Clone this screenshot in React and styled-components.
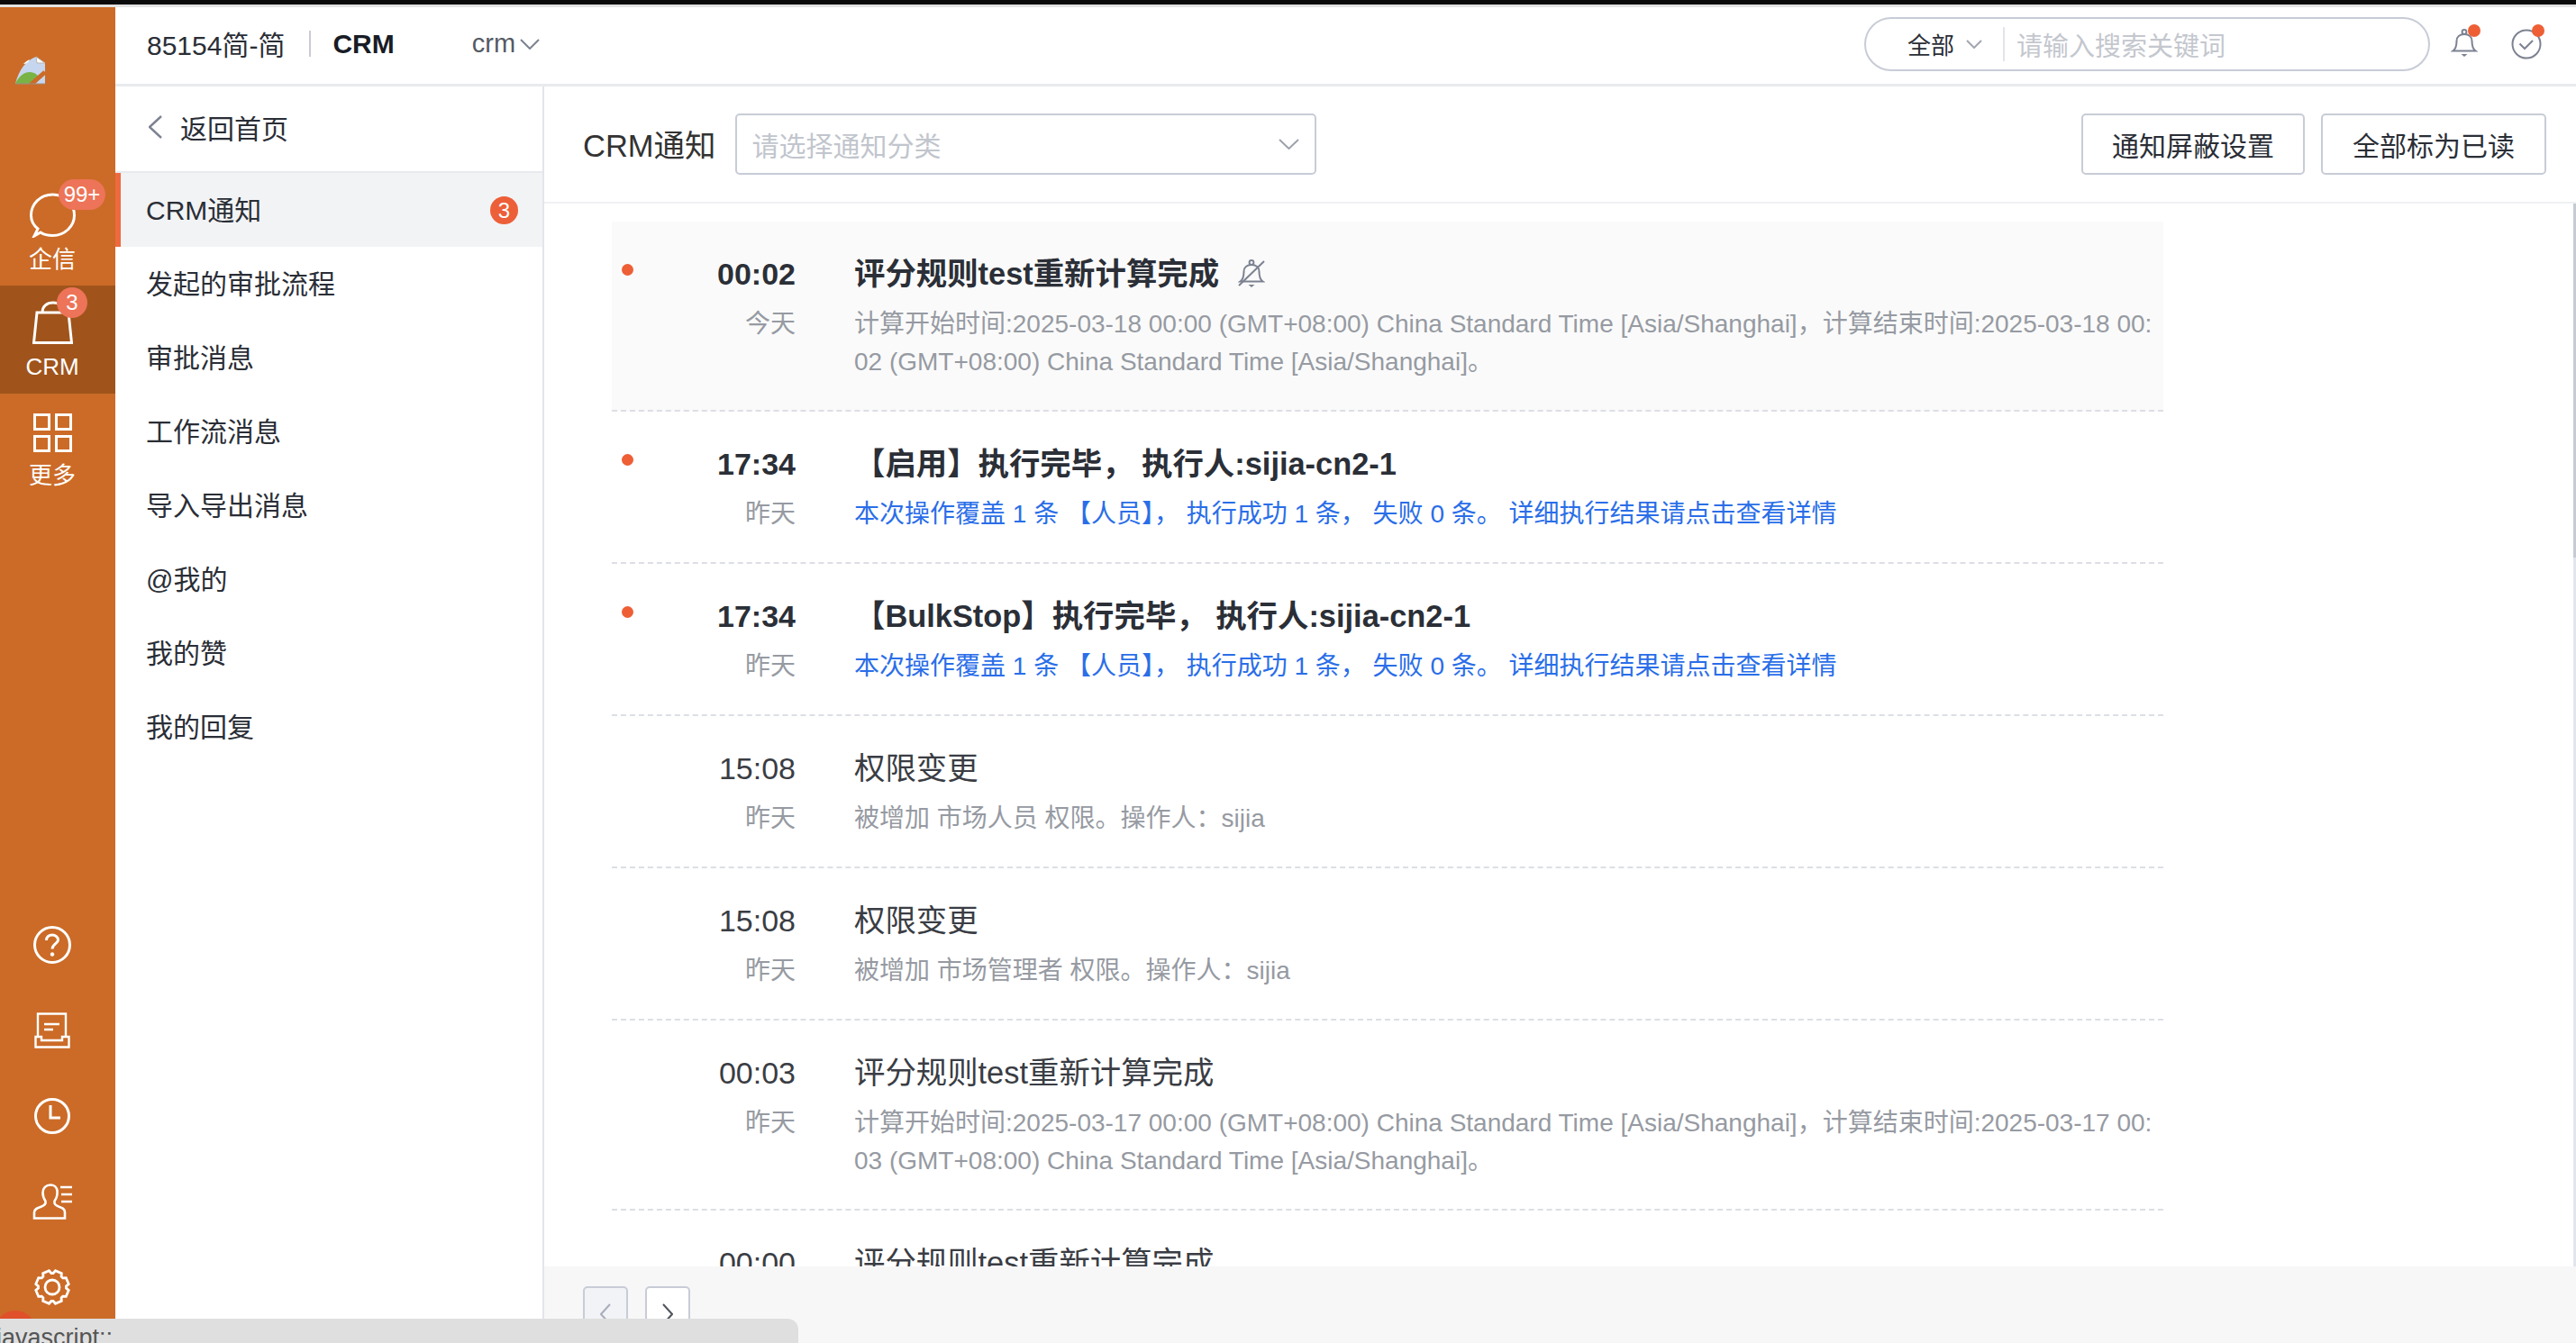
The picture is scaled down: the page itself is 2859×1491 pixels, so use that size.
import React from 'react';
import styled, { createGlobalStyle } from 'styled-components';

const GlobalStyle = createGlobalStyle`
  html, body {
    margin: 0;
    padding: 0;
    background: #fff;
    overflow: hidden;
  }
  * {
    box-sizing: border-box;
  }
`;

const Page = styled.div`
  position: relative;
  width: 2859px;
  height: 1491px;
  overflow: hidden;
  display: flex;
  flex-direction: column;
  font-family: "Liberation Sans", "Noto Sans CJK SC", sans-serif;
  color: #181c25;
`;

const TopStrip = styled.div`
  flex: none;
  height: 8px;
  background: #e2e2e2;
  border-top: 5px solid #0a0a0a;
`;

const Body = styled.div`
  flex: 1;
  min-height: 0;
  display: flex;
`;

/* left orange rail */
const Rail = styled.div`
  position: relative;
  flex: none;
  width: 128px;
  display: flex;
  flex-direction: column;
  background: #cb6b27;
  color: #fff;
`;

const LogoBox = styled.div`
  flex: none;
  height: 189px;
  padding: 54px 0 0 17px;
`;

const RailItem = styled.div`
  position: relative;
  flex: none;
  height: 120px;
  padding-right: 12px;
  display: flex;
  flex-direction: column;
  align-items: center;
  background: ${props => (props.$active ? '#a0541b' : 'transparent')};
`;

const RailIconSlot = styled.div`
  height: ${props => props.$h}px;
  display: flex;
  align-items: flex-end;
  justify-content: center;
  margin-bottom: ${props => props.$gap}px;
`;

const RailLabel = styled.div`
  font-size: 26px;
  line-height: 36px;
`;

const RailBadge = styled.span`
  position: absolute;
  left: ${props => props.$left}px;
  top: 2px;
  min-width: ${props => props.$w}px;
  height: 34px;
  border-radius: 17px;
  background: #ed7458;
  color: #fff;
  font-size: 24px;
  line-height: 34px;
  text-align: center;
`;

const RailBottom = styled.div`
  margin-top: auto;
  padding: 0 12px 15px 0;
`;

const RailTool = styled.div`
  height: 95px;
  display: flex;
  align-items: center;
  justify-content: center;
`;

const AvatarDot = styled.span`
  position: absolute;
  left: -6px;
  bottom: 0;
  width: 46px;
  height: 36px;
  border-radius: 23px 23px 0 0;
  background: #e0502a;
`;

const Main = styled.div`
  flex: 1;
  min-width: 0;
  display: flex;
  flex-direction: column;
`;

/* top header */
const Header = styled.div`
  flex: none;
  height: 88px;
  display: flex;
  align-items: center;
  padding: 0 38px 4px 35px;
  border-bottom: 3px solid #e8eaee;
`;

const Tenant = styled.div`
  font-size: 30px;
  margin-bottom: 2px;
  color: #2a2e36;
`;

const HeaderDivider = styled.div`
  width: 2px;
  height: 29px;
  margin: 0 24px 0 27px;
  background: #c9ccd3;
`;

const AppName = styled.div`
  font-size: 30px;
  font-weight: 700;
`;

const AppSwitch = styled.div`
  display: flex;
  align-items: center;
  gap: 5px;
  margin-left: 86px;
  font-size: 29px;
  color: #555a64;
`;

const SearchPill = styled.div`
  display: flex;
  align-items: center;
  width: 628px;
  height: 60px;
  margin-left: auto;
  padding-left: 46px;
  border: 2px solid #c8ccd6;
  border-radius: 30px;
`;

const SearchScope = styled.div`
  display: flex;
  align-items: center;
  gap: 13px;
  font-size: 26px;
  color: #2a2e36;
`;

const SearchDivider = styled.div`
  width: 2px;
  height: 38px;
  margin: 0 13px 0 23px;
  background: #e2e4e9;
`;

const SearchHint = styled.div`
  font-size: 29px;
  color: #c4c7ce;
`;

const NoticeIcons = styled.div`
  display: flex;
  align-items: center;
  gap: 37px;
  margin-left: 23px;
`;

const NoticeIcon = styled.div`
  position: relative;
  height: 34px;
  display: flex;
`;

const RedDot = styled.span`
  position: absolute;
  right: -3px;
  top: -5px;
  width: 14px;
  height: 14px;
  border-radius: 50%;
  background: #ee5f36;
`;

const Split = styled.div`
  flex: 1;
  min-height: 0;
  display: flex;
`;

/* category menu */
const Menu = styled.div`
  flex: none;
  width: 476px;
  border-right: 2px solid #e3e5ea;
`;

const BackRow = styled.div`
  height: 96px;
  display: flex;
  align-items: center;
  gap: 20px;
  padding: 0 0 4px 37px;
  border-bottom: 2px solid #e8eaee;
  font-size: 30px;
  color: #2a2e36;
`;

const MenuRow = styled.div`
  height: 82px;
  display: flex;
  align-items: center;
  justify-content: space-between;
  padding: 0 27px 5px ${props => (props.$active ? '28px' : '34px')};
  font-size: 30px;
  color: #2a2e36;
  background: ${props => (props.$active ? '#f2f3f5' : 'transparent')};
  border-left: ${props => (props.$active ? '6px solid #ee6a3e' : '0')};
`;

const MenuBadge = styled.span`
  width: 31px;
  height: 31px;
  margin-top: 5px;
  border-radius: 50%;
  background: #ec5f38;
  color: #fff;
  font-size: 24px;
  line-height: 31px;
  text-align: center;
`;

const Content = styled.div`
  flex: 1;
  min-width: 0;
  display: flex;
  flex-direction: column;
`;

const FilterBar = styled.div`
  flex: none;
  height: 130px;
  display: flex;
  align-items: center;
  padding: 0 33px 0 43px;
  border-bottom: 2px solid #f0f1f3;
`;

const FilterLabel = styled.div`
  font-size: 34.5px;
  color: #333;
  margin: 0 21px 3px 0;
`;

const Select = styled.div`
  width: 645px;
  height: 68px;
  display: flex;
  align-items: center;
  justify-content: space-between;
  padding: 0 17px;
  border: 2px solid #c8ccd6;
  border-radius: 5px;
  font-size: 30px;
  color: #c1c5cd;
`;

const FilterActions = styled.div`
  display: flex;
  gap: 18px;
  margin-left: auto;
`;

const ActionButton = styled.button`
  width: ${props => props.$w}px;
  height: 68px;
  padding: 0;
  background: #fff;
  border: 2px solid #c8ccd6;
  border-radius: 5px;
  font-family: inherit;
  font-size: 30px;
  color: #2a2e36;
`;

const ListArea = styled.div`
  position: relative;
  flex: 1;
  min-height: 0;
  overflow: hidden;
  padding: 20px 0 0 75px;
`;

const ScrollTrack = styled.div`
  position: absolute;
  right: 0;
  top: 0;
  bottom: 0;
  width: 3px;
  background: #e3e5ec;
`;

const ScrollThumb = styled.div`
  height: 393px;
  background: #c5cad3;
`;

const Row = styled.div`
  width: 1722px;
  display: flex;
  padding: 37px 8px 32px 0;
  border-bottom: 2px dashed #dcdfe5;
  background: ${props => (props.$highlight ? '#fafafa' : 'transparent')};
`;

const DotCell = styled.div`
  flex: none;
  width: 36px;
  padding: 10px 0 0 11px;
`;

const UnreadDot = styled.span`
  display: block;
  width: 13px;
  height: 13px;
  border-radius: 50%;
  background: #ee5f36;
`;

const TimeCell = styled.div`
  flex: none;
  width: 168px;
  margin-right: 65px;
  text-align: right;
`;

const Clock = styled.div`
  height: 42px;
  margin-bottom: 14px;
  font-size: 34px;
  line-height: 42px;
  font-weight: ${props => (props.$unread ? 700 : 400)};
  color: ${props => (props.$unread ? '#2b2f37' : '#3a3d44')};
`;

const Day = styled.div`
  font-size: 28px;
  line-height: 42px;
  color: #969aa2;
`;

const TextCell = styled.div`
  flex: 1;
  min-width: 0;
`;

const Title = styled.div`
  display: flex;
  align-items: center;
  gap: 21px;
  height: 42px;
  margin-bottom: 14px;
  font-size: 34.4px;
  line-height: 42px;
  font-weight: ${props => (props.$unread ? 700 : 400)};
  color: ${props => (props.$unread ? '#2b2f37' : '#3a3d44')};
`;

const Desc = styled.div`
  font-size: 28px;
  line-height: 42px;
  word-break: break-all;
  color: ${props => (props.$link ? '#2a6ee8' : '#969aa2')};
`;

const Pager = styled.div`
  flex: none;
  height: 85px;
  display: flex;
  gap: 19px;
  padding: 22px 0 0 43px;
  background: #f7f7f8;
`;

const PageButton = styled.div`
  width: 50px;
  height: 62px;
  display: flex;
  align-items: center;
  justify-content: center;
  border: 2px solid #c8ccd6;
  border-radius: 5px;
  background: ${props => (props.$disabled ? '#f1f3f7' : '#fff')};
`;

const StatusBar = styled.div`
  position: absolute;
  left: 0;
  bottom: 0;
  width: 886px;
  height: 27px;
  overflow: hidden;
  padding: 5px 0 0 0;
  background: #dfdfdf;
  border-radius: 0 12px 0 0;
  font-size: 27px;
  line-height: 32px;
  color: #555;
  text-indent: -4px;
`;

const Chevron = ({ dir = 'down', w = 22, h = 12, color = '#7c8291', sw = 2 }) => {
  const points = {
    down: `1,1 ${w / 2},${h - 1} ${w - 1},1`,
    left: `${w - 1},1 1,${h / 2} ${w - 1},${h - 1}`,
    right: `1,1 ${w - 1},${h / 2} 1,${h - 1}`,
  };
  return (
    <svg width={w} height={h} viewBox={`0 0 ${w} ${h}`} fill="none">
      <polyline points={points[dir]} stroke={color} strokeWidth={sw} />
    </svg>
  );
};

const BrokenImage = () => (
  <svg width="33" height="32" viewBox="0 0 33 32">
    <path d="M0 31C4 15 12 5 23 1L33 8V31Z" fill="#c6d6ef" />
    <path d="M23 1L33 8H24Z" fill="#fff" stroke="#b9b4ae" strokeWidth="1" />
    <path d="M9 9C11 7 13 5 16 4C15 7 12 9 9 9Z" fill="#fff" />
    <path d="M0 31C4 22 10 18 16 18C22 18 25 22 27 24L19 31Z" fill="#79b346" />
    <line x1="15" y1="34" x2="33" y2="18" stroke="#cb6b27" strokeWidth="5" />
    <path d="M0 31H33" stroke="#9a8f86" strokeWidth="1.2" />
  </svg>
);

const ChatIcon = () => (
  <svg width="51" height="50" viewBox="0 0 51 50" fill="none" stroke="#fff" strokeWidth="3">
    <path d="M9 40C4 36 1.5 31 1.5 25C1.5 12 12 2 25.5 2C39 2 49.5 12 49.5 25C49.5 37 39 47.5 25.5 47.5C20 47.5 15 46 12 44L5 48Z" />
  </svg>
);

const BagIcon = () => (
  <svg width="45" height="48" viewBox="0 0 45 48" fill="none" stroke="#fff" strokeWidth="3">
    <path d="M5 13H40L43.5 46.5H1.5Z" />
    <path d="M11 13C11 6 16 2 23 2C30 2 34 6 34 13" />
  </svg>
);

const GridIcon = () => (
  <svg width="43" height="43" viewBox="0 0 43 43" fill="none" stroke="#fff" strokeWidth="3">
    <rect x="1.5" y="1.5" width="16" height="16" />
    <rect x="25.5" y="1.5" width="16" height="16" />
    <rect x="1.5" y="25.5" width="16" height="16" />
    <rect x="25.5" y="25.5" width="16" height="16" />
  </svg>
);

const HelpIcon = () => (
  <svg width="42" height="42" viewBox="0 0 42 42" fill="none" stroke="#fff" strokeWidth="3">
    <circle cx="21" cy="21" r="19.5" />
    <path d="M14.5 16C14.5 12 17.5 10 21 10C24.5 10 27.5 12.5 27.5 15.5C27.5 19.5 21 20 21 25.5" />
    <circle cx="21" cy="31.5" r="2.2" fill="#fff" stroke="none" />
  </svg>
);

const TrayIcon = () => (
  <svg width="40" height="40" viewBox="0 0 40 40" fill="none" stroke="#fff" strokeWidth="2.4">
    <path d="M4 27V1.5H35V27" />
    <path d="M1.5 27H8V31H31V27H38.5V38.5H1.5Z" />
    <path d="M11 13H28M11 19H21" strokeWidth="2.6" />
  </svg>
);

const ClockIcon = () => (
  <svg width="40" height="40" viewBox="0 0 40 40" fill="none" stroke="#fff" strokeWidth="3">
    <circle cx="20" cy="20" r="18.5" />
    <path d="M18 8V22H29" />
  </svg>
);

const PersonIcon = () => (
  <svg width="45" height="40" viewBox="0 0 45 40" fill="none" stroke="#fff" strokeWidth="2.6">
    <path d="M2 38.5V32C2 28 6 27 10 25.5C14 24 15 22 14.5 19.5C12 16 11.5 13 11.5 10C11.5 5 15 1.5 20 1.5C24 1.5 27 4 27.5 8C28 13 27 16 24.5 19.5C24 22.5 25 24 29 25.5C33 27 36 28 36 32V38.5Z" />
    <path d="M31 4H44M32 12H44M32 20H44" />
  </svg>
);

const gearPath = (() => {
  const parts = [];
  const teeth = 8;
  for (let i = 0; i < teeth; i++) {
    const step = (Math.PI * 2) / teeth;
    const a = i * step + step / 2;
    const at = (r, off) => `${(20 + r * Math.cos(a + off)).toFixed(1)} ${(20 + r * Math.sin(a + off)).toFixed(1)}`;
    parts.push(`${i === 0 ? 'M' : 'L'}${at(15.5, -0.32)}`, `L${at(18.5, -0.2)}`, `L${at(18.5, 0.2)}`, `L${at(15.5, 0.32)}`);
  }
  return `${parts.join(' ')} Z`;
})();

const GearIcon = () => (
  <svg width="40" height="40" viewBox="0 0 40 40" fill="none" stroke="#fff" strokeWidth="2.8">
    <path d={gearPath} />
    <circle cx="20" cy="20" r="8" />
  </svg>
);

const BellIcon = ({ muted }) => (
  <svg width="30" height="32" viewBox="0 0 30 32" fill="none" stroke="#7c8291" strokeWidth="2">
    <circle cx="15" cy="3.5" r="2.4" />
    <path d="M2.5 24.5C6 22 6.5 18 6.5 13.5C6.5 9 10 6 15 6C20 6 23.5 9 23.5 13.5C23.5 18 24 22 27.5 24.5Z" />
    <path d="M11.5 28H18.5L15 31Z" fill="#7c8291" stroke="none" />
    {muted && <line x1="1" y1="29" x2="29" y2="2" />}
  </svg>
);

const CheckCircle = () => (
  <svg width="34" height="34" viewBox="0 0 34 34" fill="none" stroke="#7c8291" strokeWidth="2">
    <circle cx="17" cy="17" r="15.5" />
    <polyline points="9.5,16.5 15,22 24,13" />
  </svg>
);

const calcDesc = (start, end) =>
  `计算开始时间:${start} 00:00 (GMT+08:00) China Standard Time [Asia/Shanghai]，计算结束时间:${end} ${end === '2025-03-18' ? '00:02' : '00:03'} (GMT+08:00) China Standard Time [Asia/Shanghai]。`;

const linkDesc = '本次操作覆盖 1 条 【人员】， 执行成功 1 条， 失败 0 条。 详细执行结果请点击查看详情';

const rows = [
  { time: '00:02', day: '今天', title: '评分规则test重新计算完成', desc: calcDesc('2025-03-18', '2025-03-18'), unread: true, muted: true, highlight: true },
  { time: '17:34', day: '昨天', title: '【启用】执行完毕， 执行人:sijia-cn2-1', desc: linkDesc, unread: true, link: true },
  { time: '17:34', day: '昨天', title: '【BulkStop】执行完毕， 执行人:sijia-cn2-1', desc: linkDesc, unread: true, link: true },
  { time: '15:08', day: '昨天', title: '权限变更', desc: '被增加 市场人员 权限。操作人：sijia' },
  { time: '15:08', day: '昨天', title: '权限变更', desc: '被增加 市场管理者 权限。操作人：sijia' },
  { time: '00:03', day: '昨天', title: '评分规则test重新计算完成', desc: calcDesc('2025-03-17', '2025-03-17') },
  { time: '00:00', day: '昨天', title: '评分规则test重新计算完成', desc: '' },
];

const menuItems = ['发起的审批流程', '审批消息', '工作流消息', '导入导出消息', '@我的', '我的赞', '我的回复'];

const App = () => (
  <Page>
    <GlobalStyle />
    <TopStrip />
    <Body>
      <Rail>
        <LogoBox>
          <BrokenImage />
        </LogoBox>
        <RailItem>
          <RailIconSlot $h={67} $gap={6}>
            <ChatIcon />
          </RailIconSlot>
          <RailLabel>企信</RailLabel>
          <RailBadge $left={65} $w={52}>99+</RailBadge>
        </RailItem>
        <RailItem $active>
          <RailIconSlot $h={65} $gap={7}>
            <BagIcon />
          </RailIconSlot>
          <RailLabel>CRM</RailLabel>
          <RailBadge $left={63} $w={34}>3</RailBadge>
        </RailItem>
        <RailItem>
          <RailIconSlot $h={65} $gap={8}>
            <GridIcon />
          </RailIconSlot>
          <RailLabel>更多</RailLabel>
        </RailItem>
        <RailBottom>
          <RailTool><HelpIcon /></RailTool>
          <RailTool><TrayIcon /></RailTool>
          <RailTool><ClockIcon /></RailTool>
          <RailTool><PersonIcon /></RailTool>
          <RailTool><GearIcon /></RailTool>
        </RailBottom>
        <AvatarDot />
      </Rail>

      <Main>
        <Header>
          <Tenant>85154简-简</Tenant>
          <HeaderDivider />
          <AppName>CRM</AppName>
          <AppSwitch>
            crm
            <Chevron w={22} h={12} />
          </AppSwitch>
          <SearchPill>
            <SearchScope>
              全部
              <Chevron w={18} h={10} color="#a2a6af" />
            </SearchScope>
            <SearchDivider />
            <SearchHint>请输入搜索关键词</SearchHint>
          </SearchPill>
          <NoticeIcons>
            <NoticeIcon>
              <BellIcon />
              <RedDot />
            </NoticeIcon>
            <NoticeIcon>
              <CheckCircle />
              <RedDot />
            </NoticeIcon>
          </NoticeIcons>
        </Header>

        <Split>
          <Menu>
            <BackRow>
              <Chevron dir="left" w={15} h={26} sw={2.4} />
              返回首页
            </BackRow>
            <MenuRow $active>
              CRM通知
              <MenuBadge>3</MenuBadge>
            </MenuRow>
            {menuItems.map(item => (
              <MenuRow key={item}>{item}</MenuRow>
            ))}
          </Menu>

          <Content>
            <FilterBar>
              <FilterLabel>CRM通知</FilterLabel>
              <Select>
                请选择通知分类
                <Chevron w={23} h={12} color="#9da2ac" />
              </Select>
              <FilterActions>
                <ActionButton $w={248}>通知屏蔽设置</ActionButton>
                <ActionButton $w={250}>全部标为已读</ActionButton>
              </FilterActions>
            </FilterBar>

            <ListArea>
              {rows.map((row, i) => (
                <Row key={i} $highlight={row.highlight}>
                  <DotCell>{row.unread && <UnreadDot />}</DotCell>
                  <TimeCell>
                    <Clock $unread={row.unread}>{row.time}</Clock>
                    <Day>{row.day}</Day>
                  </TimeCell>
                  <TextCell>
                    <Title $unread={row.unread}>
                      {row.title}
                      {row.muted && <BellIcon muted />}
                    </Title>
                    <Desc $link={row.link}>{row.desc}</Desc>
                  </TextCell>
                </Row>
              ))}
              <ScrollTrack>
                <ScrollThumb />
              </ScrollTrack>
            </ListArea>

            <Pager>
              <PageButton $disabled>
                <Chevron dir="left" w={12} h={24} color="#a9aeb9" />
              </PageButton>
              <PageButton>
                <Chevron dir="right" w={12} h={24} color="#50545e" />
              </PageButton>
            </Pager>
          </Content>
        </Split>
      </Main>
    </Body>
    <StatusBar>javascript:;</StatusBar>
  </Page>
);

export default App;
